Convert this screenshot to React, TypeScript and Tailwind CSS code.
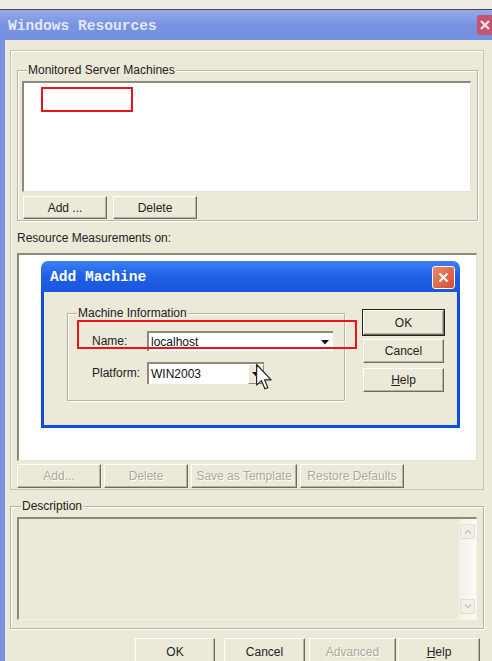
import React from 'react';

function Btn({
  className = '',
  disabled = false,
  children,
}: {
  className?: string;
  disabled?: boolean;
  children: React.ReactNode;
}) {
  return (
    <div
      className={
        'flex items-center justify-center bg-[#ece9d8] border-t border-l border-white border-r border-b border-r-[#6f6d62] border-b-[#6f6d62] shadow-[inset_-1px_-1px_0_#b5b2a4] text-[12px] ' +
        (disabled ? 'text-[#aca899] [text-shadow:1px_1px_0_#ffffff] ' : 'text-[#222] ') +
        className
      }
    >
      {children}
    </div>
  );
}

function Group({ label, className = '', labelLeft = 'left-[9px]', children }: { label: string; className?: string; labelLeft?: string; children?: React.ReactNode }) {
  return (
    <div className={'relative border border-[#b8b5a6] shadow-[inset_1px_1px_0_#ffffff,1px_1px_0_#ffffff] ' + className}>
      <span className={'absolute -top-[8px] bg-[#ece9d8] px-[1px] text-[12px] leading-[14px] text-[#222] ' + labelLeft}>{label}</span>
      {children}
    </div>
  );
}

function Arrow() {
  return (
    <svg width="8" height="5" viewBox="0 0 8 5">
      <path d="M0 0 H8 L4 4.5 Z" fill="#111" />
    </svg>
  );
}

export default function App() {
  return (
    <div className="w-[492px] h-[661px] overflow-hidden bg-[#ece9d8] flex flex-col font-['Liberation_Sans',Arial,sans-serif] relative">
      {/* top strip */}
      <div className="h-[10px] shrink-0 bg-[#efece3] border-b border-[#4a4a4a]" />

      {/* title bar */}
      <div className="h-[30px] shrink-0 flex items-center justify-between bg-gradient-to-b from-[#94abea] via-[#7893e2] to-[#7390e0] pl-[8px]">
        <span className="mt-[4px] font-['Liberation_Mono',monospace] font-bold text-[14.6px] text-[#e3e9f9]">Windows Resources</span>
        <div className="w-[15px] h-[20px] bg-[#c65470] rounded-l-[3px] flex items-center justify-center">
          <svg width="12" height="12" viewBox="0 0 12 12">
            <path d="M2 2 L10 10 M10 2 L2 10" stroke="#f5e8ec" strokeWidth="2.2" />
          </svg>
        </div>
      </div>

      <div className="flex-1 flex">
        <div className="w-[5px] bg-[#7b90dc] shrink-0" />
        <div className="flex-1 flex flex-col">
          {/* outer panel */}
          <div className="mt-[10px] ml-[5px] w-[474px] h-[440px] border border-[#c7c4b6] shadow-[inset_1px_1px_0_#ffffff] flex flex-col">
            <Group label="Monitored Server Machines" className="mt-[19px] ml-[6px] w-[461px] h-[151px] flex flex-col">
              <div className="mt-[10px] ml-[4px] w-[449px] h-[111px] bg-white border-t-2 border-l-2 border-[#8d8a7d] border-r border-b border-r-[#e6e3d6] border-b-[#e6e3d6] relative">
                <div className="absolute left-[17px] top-[4px] w-[92px] h-[25px] border-2 border-[#e8161a]" />
              </div>
              <div className="mt-[4px] ml-[5px] flex gap-[6px]">
                <Btn className="w-[84px] h-[23px]">Add ...</Btn>
                <Btn className="w-[84px] h-[23px]">Delete</Btn>
              </div>
            </Group>

            <div className="mt-[10px] ml-[6px] text-[12px] leading-[14px] text-[#222]">Resource Measurements on:</div>

            <div className="mt-[8px] ml-[6px] w-[460px] h-[208px] bg-white border-t-2 border-l-2 border-[#8d8a7d] border-r border-b border-r-[#e6e3d6] border-b-[#e6e3d6]" />

            <div className="mt-[3px] ml-[6px] flex">
              <Btn disabled className="w-[84px] h-[24px]">Add...</Btn>
              <Btn disabled className="ml-[3px] w-[84px] h-[24px]">Delete</Btn>
              <Btn disabled className="ml-[3px] w-[106px] h-[24px]">Save as Template</Btn>
              <Btn disabled className="ml-[3px] w-[104px] h-[24px]">Restore Defaults</Btn>
            </div>
          </div>

          {/* description */}
          <Group label="Description" labelLeft="left-[10px]" className="mt-[16px] ml-[5px] w-[474px] h-[123px]">
            <div className="mt-[10px] ml-[6px] w-[460px] h-[103px] bg-[#ece9d8] border-t-2 border-l-2 border-[#8d8a7d] border-r border-b border-r-[#f4f2ea] border-b-[#f4f2ea] flex justify-end">
              <div className="w-[17px] h-full bg-gradient-to-r from-[#f2f0e8] to-[#fbfaf6] flex flex-col justify-between py-[5px]">
                <div className="h-[15px] mx-[1px] bg-[#f1efe6] border border-[#e2dfd2] rounded-[2px] flex items-center justify-center">
                  <svg width="8" height="5" viewBox="0 0 8 5"><path d="M1 4.5 L4 1.5 L7 4.5" fill="none" stroke="#c9c6b8" strokeWidth="1.5" /></svg>
                </div>
                <div className="h-[15px] mx-[1px] bg-[#f1efe6] border border-[#e2dfd2] rounded-[2px] flex items-center justify-center">
                  <svg width="8" height="5" viewBox="0 0 8 5"><path d="M1 0.5 L4 3.5 L7 0.5" fill="none" stroke="#c9c6b8" strokeWidth="1.5" /></svg>
                </div>
              </div>
            </div>
          </Group>

          {/* bottom buttons */}
          <div className="mt-[9px] flex">
            <Btn className="ml-[130px] w-[80px] h-[26px] pt-[2px]">OK</Btn>
            <Btn className="ml-[9px] w-[81px] h-[26px] pt-[2px]">Cancel</Btn>
            <Btn disabled className="ml-[4px] w-[87px] h-[26px] pt-[2px]">Advanced</Btn>
            <Btn className="ml-[2px] w-[82px] h-[26px] pt-[2px]"><span><span className="underline">H</span>elp</span></Btn>
          </div>
        </div>
      </div>

      {/* Add Machine dialog */}
      <div className="absolute left-[41px] top-[261px] w-[419px] h-[167px] flex flex-col">
        <div className="h-[31px] shrink-0 rounded-t-[7px] bg-gradient-to-b from-[#3d80f3] via-[#1f5fe4] to-[#1957df] flex items-center justify-between pl-[9px] pr-[5px]">
          <span className="mt-[3px] font-['Liberation_Mono',monospace] font-bold text-[14.6px] text-white">Add Machine</span>
          <div className="mt-[1px] w-[23px] h-[23px] rounded-[3px] border border-white bg-gradient-to-br from-[#ea8a6c] to-[#d64a2c] flex items-center justify-center">
            <svg width="13" height="13" viewBox="0 0 13 13">
              <path d="M2.5 2.5 L10.5 10.5 M10.5 2.5 L2.5 10.5" stroke="#fff" strokeWidth="2.2" />
            </svg>
          </div>
        </div>
        <div className="flex-1 bg-[#ece9d8] border-x-[3px] border-b-[3px] border-[#0c4ddc] flex pt-[18px] pl-[23px]">
          <Group label="Machine Information" className="mt-[3px] w-[278px] h-[88px]">
            <div className="mt-[17px] ml-[24px] flex items-center">
              <span className="w-[55px] text-[12px] text-[#222]">Name:</span>
              <div className="w-[186px] h-[20px] bg-white border-t-2 border-l-2 border-[#8d8a7d] flex items-center justify-between pl-[2px] pr-[4px]">
                <span className="text-[12px] text-[#111]">localhost</span>
                <Arrow />
              </div>
            </div>
            <div className="mt-[11px] ml-[24px] flex items-center">
              <span className="w-[55px] text-[12px] text-[#222]">Platform:</span>
              <div className="w-[117px] h-[22px] bg-white border-t-2 border-l-2 border-[#8d8a7d] flex items-center justify-between pl-[2px]">
                <span className="text-[12px] text-[#111]">WIN2003</span>
                <div className="w-[16px] h-full bg-[#ece9d8] border-l border-t border-white border-r border-b border-r-[#8d8a7d] border-b-[#8d8a7d] flex items-center justify-center">
                  <Arrow />
                </div>
              </div>
            </div>
          </Group>
          <div className="ml-[18px] flex flex-col w-[81px]">
            <Btn className="h-[25px] w-[81px] outline outline-1 outline-[#222]">OK</Btn>
            <Btn className="mt-[4px] h-[24px] w-[81px]">Cancel</Btn>
            <Btn className="mt-[5px] h-[24px] w-[81px]"><span><span className="underline">H</span>elp</span></Btn>
          </div>
        </div>
        {/* red highlight */}
        <div className="absolute left-[36px] top-[59px] w-[280px] h-[29px] border-2 border-[#e8161a]" />
        {/* mouse cursor */}
        <svg className="absolute left-[214px] top-[102px]" width="18" height="28" viewBox="0 0 12 19">
          <path d="M1 1 L1 15 L4.3 12 L6.6 17.5 L8.6 16.7 L6.4 11.4 L10.8 11.4 Z" fill="#fff" stroke="#222" strokeWidth="0.8" strokeLinejoin="round" />
        </svg>
      </div>
    </div>
  );
}
